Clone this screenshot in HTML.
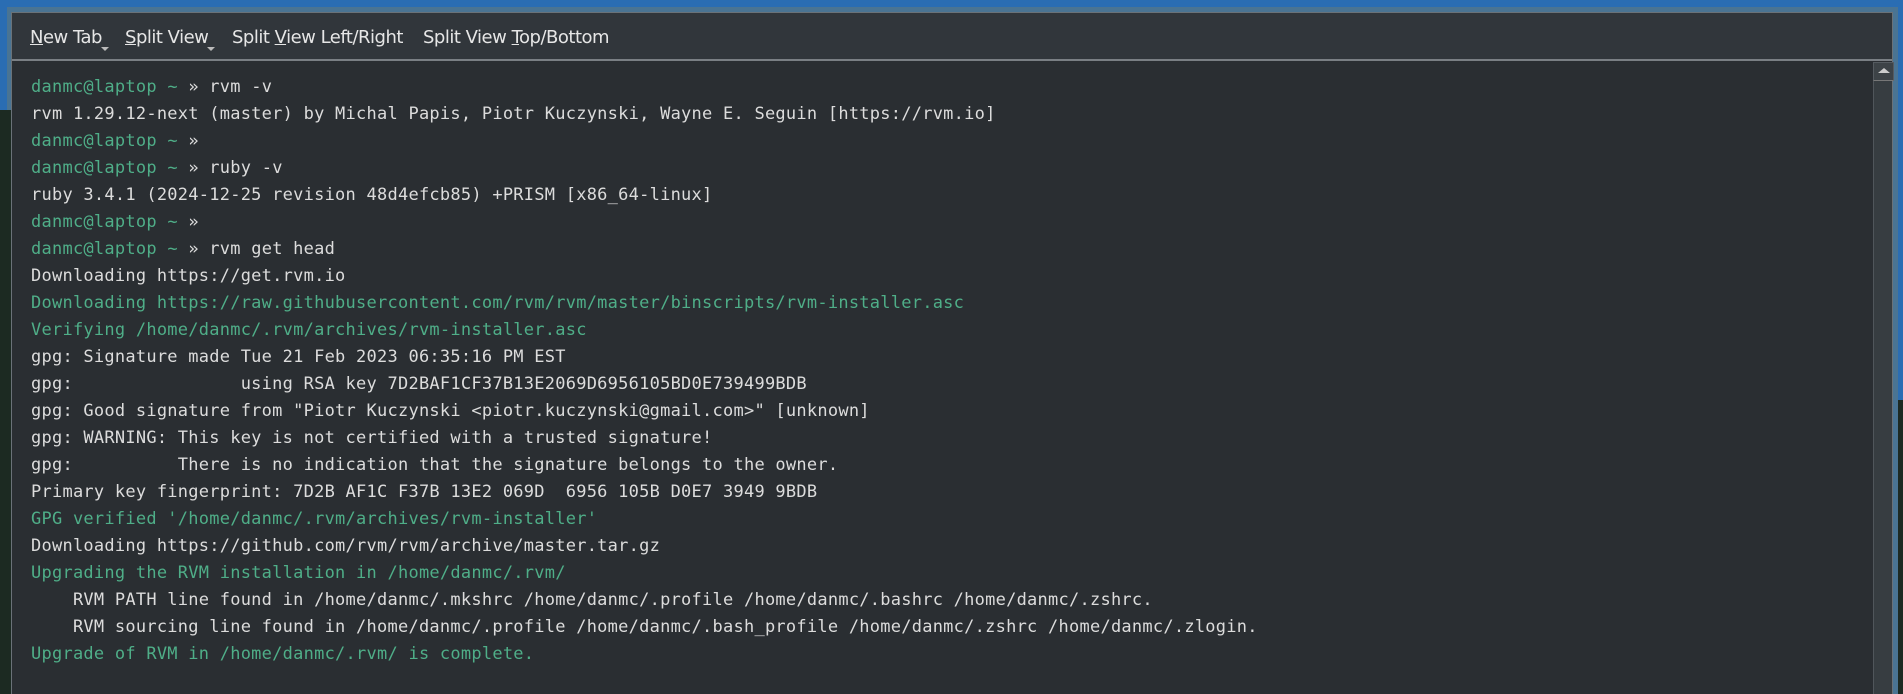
<!DOCTYPE html>
<html><head><meta charset="utf-8"><style>
html,body{margin:0;padding:0;width:1903px;height:694px;overflow:hidden;background:#2a6db3;}
body{position:relative;}
.lbg{position:absolute;left:0;top:110px;width:12px;height:584px;background:#1c2a22;}
.rbg{position:absolute;left:1898px;top:400px;width:5px;height:294px;background:#1d2a22;}
.frame{position:absolute;left:7px;top:7px;width:1891px;height:690px;background:#4a7493;}
.win{position:absolute;left:11px;top:12px;width:1880px;height:690px;background:#2a2e32;border-left:1px solid #6a7278;border-top:1px solid #6a7278;border-right:1px solid #6a7278;}
.tb{position:absolute;left:0;top:0;width:1880px;height:46px;background:#31363b;border-bottom:2px solid #7a7f84;font-family:"DejaVu Sans","Liberation Sans",sans-serif;font-size:18px;color:#e6e6e6;}
.tb span{position:absolute;top:14px;white-space:pre;letter-spacing:-0.5px;}
.tb u{text-decoration:underline;}
.arr{position:absolute;top:34px;width:0;height:0;border-left:4px solid transparent;border-right:4px solid transparent;border-top:4px solid #bbb;}
.term{position:absolute;left:19px;top:61px;font-family:"DejaVu Sans Mono","Liberation Mono",monospace;font-size:17px;line-height:27px;color:#dcdcdc;white-space:pre;letter-spacing:0.25px;}
.g{color:#4fae88;}
.sb{position:absolute;left:1861px;top:49px;width:18px;height:641px;background:#373d41;border-left:1px solid #50565b;}
.up{position:absolute;left:1861px;top:49px;width:19px;height:17px;background:#3d4347;border:1px solid #555b60;border-bottom:1px solid #777;}
.up:after{content:"";position:absolute;left:4px;top:5px;border-left:6px solid transparent;border-right:6px solid transparent;border-bottom:5px solid #ccc;}
</style></head><body>
<div class="frame"></div>
<div class="lbg"></div><div class="rbg"></div>
<div class="win">
<div class="tb">
<span style="left:18px"><u>N</u>ew Tab</span><div class="arr" style="left:89px"></div>
<span style="left:113px"><u>S</u>plit View</span><div class="arr" style="left:195px"></div>
<span style="left:220px">Split <u>V</u>iew Left/Right</span>
<span style="left:411px">Split View <u>T</u>op/Bottom</span>
</div>
<div class="term"><span class="g">danmc@laptop</span> <span class="g">~</span> » rvm -v
rvm 1.29.12-next (master) by Michal Papis, Piotr Kuczynski, Wayne E. Seguin [https://rvm.io]
<span class="g">danmc@laptop</span> <span class="g">~</span> »
<span class="g">danmc@laptop</span> <span class="g">~</span> » ruby -v
ruby 3.4.1 (2024-12-25 revision 48d4efcb85) +PRISM [x86_64-linux]
<span class="g">danmc@laptop</span> <span class="g">~</span> »
<span class="g">danmc@laptop</span> <span class="g">~</span> » rvm get head
Downloading https://get.rvm.io
<span class="g">Downloading https://raw.githubusercontent.com/rvm/rvm/master/binscripts/rvm-installer.asc</span>
<span class="g">Verifying /home/danmc/.rvm/archives/rvm-installer.asc</span>
gpg: Signature made Tue 21 Feb 2023 06:35:16 PM EST
gpg:                using RSA key 7D2BAF1CF37B13E2069D6956105BD0E739499BDB
gpg: Good signature from "Piotr Kuczynski &lt;piotr.kuczynski@gmail.com&gt;" [unknown]
gpg: WARNING: This key is not certified with a trusted signature!
gpg:          There is no indication that the signature belongs to the owner.
Primary key fingerprint: 7D2B AF1C F37B 13E2 069D  6956 105B D0E7 3949 9BDB
<span class="g">GPG verified '/home/danmc/.rvm/archives/rvm-installer'</span>
Downloading https://github.com/rvm/rvm/archive/master.tar.gz
<span class="g">Upgrading the RVM installation in /home/danmc/.rvm/</span>
    RVM PATH line found in /home/danmc/.mkshrc /home/danmc/.profile /home/danmc/.bashrc /home/danmc/.zshrc.
    RVM sourcing line found in /home/danmc/.profile /home/danmc/.bash_profile /home/danmc/.zshrc /home/danmc/.zlogin.
<span class="g">Upgrade of RVM in /home/danmc/.rvm/ is complete.</span></div>
<div class="sb"></div><div class="up"></div>
</div>
</body></html>
